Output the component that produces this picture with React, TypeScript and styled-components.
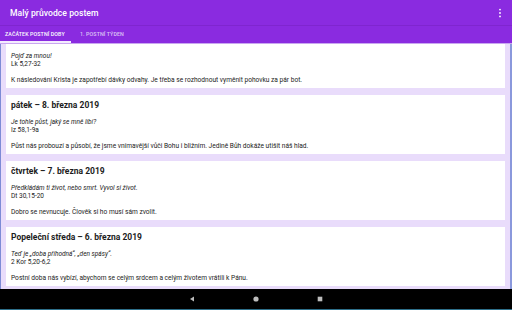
import * as React from 'react';
import styled, { createGlobalStyle } from 'styled-components';

const GlobalStyle = createGlobalStyle`
  html, body {
    margin: 0;
    padding: 0;
    background: #000;
  }
  body {
    font-family: Roboto, "Noto Sans", "Liberation Sans", sans-serif;
  }
`;

const $Screen = styled.div`
  width: 512px;
  height: 310px;
  display: flex;
  flex-direction: column;
  overflow: hidden;
  background: #e9dcfb;
`;

const $AppBar = styled.header`
  height: 25px;
  flex: none;
  display: flex;
  align-items: center;
  justify-content: space-between;
  padding: 0 10px;
  background: #8a2be0;
  color: #fff;
`;

const $Title = styled.h1`
  margin: 0;
  font-size: 8.6px;
  font-weight: 500;
  letter-spacing: 0.05px;
`;

const $Tabs = styled.nav`
  height: 18px;
  flex: none;
  display: flex;
  align-items: stretch;
  background: #8a2be0;
  border-top: 1px solid #7f25cf;
  box-sizing: border-box;
  box-shadow: 0 1px 0 #c9a6f0;
  position: relative;
  z-index: 1;
`;

const $Tab = styled.div<{ $active?: boolean }>`
  display: flex;
  align-items: center;
  white-space: nowrap;
  padding: 1px 5px 0;
  min-width: ${(p) => (p.$active ? '71px' : '0')};
  box-sizing: border-box;
  font-size: 5.3px;
  font-weight: 500;
  letter-spacing: 0.1px;
  text-transform: uppercase;
  color: ${(p) => (p.$active ? '#fff' : 'rgba(255,255,255,0.72)')};
  border-bottom: 2px solid ${(p) => (p.$active ? '#f4ecff' : 'transparent')};
  margin-left: ${(p) => (p.$active ? '0' : '4px')};
`;

const $Content = styled.main`
  flex: 1;
  overflow: hidden;
  border-left: 1px solid #7d8bd6;
  border-right: 2px solid #8a98dc;
  padding: 0 5px;
`;

const $List = styled.div`
  display: flex;
  flex-direction: column;
  gap: 7px;
`;

// the first card is scrolled up, so its heading sits under the tabs
const $Card = styled.article<{ $scrolled?: boolean }>`
  background: #fff;
  padding: ${(p) => (p.$scrolled ? '9px' : '4px')} 5px 4px;
  color: #222;
`;

const $DayTitle = styled.h2`
  margin: 0 0 7px;
  font-size: 8.5px;
  line-height: 12px;
  font-weight: 700;
  color: #1c1c1c;
`;

const $Quote = styled.div`
  font-size: 6.5px;
  line-height: 8px;
`;

const $QuoteText = styled.div`
  font-style: italic;
`;

const $Body = styled.p`
  margin: 8px 0 0;
  font-size: 6.6px;
  line-height: 8px;
`;

const $NavBar = styled.footer`
  height: 21px;
  flex: none;
  background: #000;
  border-bottom: 1px solid #2d6f8a;
  box-sizing: border-box;
  display: flex;
  align-items: center;
  justify-content: center;
  gap: 58px;
`;

const $NavIcon = styled.svg`
  width: 6px;
  height: 6px;
  display: block;
`;

function Kebab() {
  return (
    <svg width="4" height="10" viewBox="0 0 4 10">
      <circle cx="2" cy="1.6" r="0.9" fill="#fff" />
      <circle cx="2" cy="5" r="0.9" fill="#fff" />
      <circle cx="2" cy="8.4" r="0.9" fill="#fff" />
    </svg>
  );
}

const days = [
  {
    title: '',
    quote: 'Pojď za mnou!',
    ref: 'Lk 5,27-32',
    text: 'K následování Krista je zapotřebí dávky odvahy. Je třeba se rozhodnout vyměnit pohovku za pár bot.',
  },
  {
    title: 'pátek – 8. března 2019',
    quote: 'Je tohle půst, jaký se mně líbí?',
    ref: 'Iz 58,1-9a',
    text: 'Půst nás probouzí a působí, že jsme vnímavější vůči Bohu i bližním. Jedině Bůh dokáže utišit náš hlad.',
  },
  {
    title: 'čtvrtek – 7. března 2019',
    quote: 'Předkládám ti život, nebo smrt. Vyvol si život.',
    ref: 'Dt 30,15-20',
    text: 'Dobro se nevnucuje. Člověk si ho musí sám zvolit.',
  },
  {
    title: 'Popeleční středa – 6. března 2019',
    quote: 'Teď je „doba příhodná“, „den spásy“.',
    ref: '2 Kor 5,20-6,2',
    text: 'Postní doba nás vybízí, abychom se celým srdcem a celým životem vrátili k Pánu.',
  },
];

export default function App() {
  return (
    <>
      <GlobalStyle />
      <$Screen>
        <$AppBar>
          <$Title>Malý průvodce postem</$Title>
          <Kebab />
        </$AppBar>
        <$Tabs>
          <$Tab $active>Začátek postní doby</$Tab>
          <$Tab>1. postní týden</$Tab>
        </$Tabs>
        <$Content>
          <$List>
            {days.map((d) => (
              <$Card key={d.ref} $scrolled={!d.title}>
                {d.title && <$DayTitle>{d.title}</$DayTitle>}
                <$Quote>
                  <$QuoteText>{d.quote}</$QuoteText>
                  <div>{d.ref}</div>
                </$Quote>
                <$Body>{d.text}</$Body>
              </$Card>
            ))}
          </$List>
        </$Content>
        <$NavBar>
          <$NavIcon viewBox="0 0 6 6">
            <polygon points="5,0.5 5,5.5 1,3" fill="#bdbdbd" />
          </$NavIcon>
          <$NavIcon viewBox="0 0 6 6">
            <circle cx="3" cy="3" r="2.6" fill="#bdbdbd" />
          </$NavIcon>
          <$NavIcon viewBox="0 0 6 6">
            <rect x="0.7" y="0.7" width="4.6" height="4.6" fill="#bdbdbd" />
          </$NavIcon>
        </$NavBar>
      </$Screen>
    </>
  );
}
